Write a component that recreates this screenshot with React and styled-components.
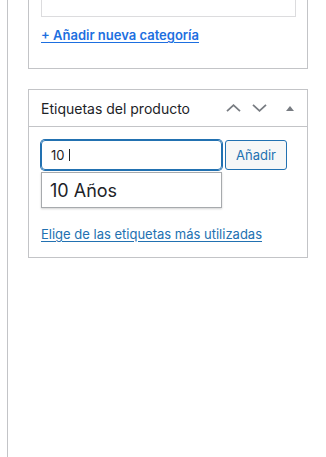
import styled, { createGlobalStyle } from 'styled-components';

const GlobalStyle = createGlobalStyle`
  body {
    margin: 0;
    background: #fff;
    font-family: Inter, "Liberation Sans", Arial, sans-serif;
    color: #1d2327;
  }
`;

const Page = styled.div`
  padding-left: 7px;
  min-height: 100vh;
`;

const Sidebar = styled.div`
  border-left: 1px solid #c3c4c7;
  min-height: 100vh;
  padding-left: 20px;
`;

const Panel = styled.div`
  width: 278px;
  border: 1px solid #c3c4c7;
  border-top: ${(p) => (p.$cut ? 'none' : '1px solid #c3c4c7')};
  margin-top: ${(p) => (p.$cut ? '0' : '20px')};
  background: #fff;
`;

const Inside = styled.div`
  padding: ${(p) => p.$pad};
`;

const CategoryList = styled.div`
  width: 253px;
  height: 16px;
  border: 1px solid #dcdcde;
  border-top: none;
`;

const Link = styled.a`
  display: block;
  font-size: 13px;
  line-height: 18px;
  font-weight: ${(p) => (p.$strong ? 600 : 400)};
  color: ${(p) => (p.$strong ? '#1d6fe0' : '#2271b1')};
  text-decoration: underline;
  text-underline-offset: 2px;
  margin-top: ${(p) => p.$top};
  cursor: pointer;
`;

const Header = styled.div`
  display: flex;
  align-items: center;
  height: 36px;
  border-bottom: 1px solid #c3c4c7;
  padding-left: 12px;
`;

const Title = styled.h2`
  flex: 1;
  margin: 0;
  font-size: 14px;
  font-weight: 400;
  color: #1d2327;
`;

const HandleButton = styled.button`
  width: ${(p) => p.$w}px;
  height: 36px;
  padding: 0;
  border: none;
  background: none;
  display: flex;
  align-items: center;
  justify-content: center;
  color: #787c82;
  cursor: pointer;
`;

const AddRow = styled.div`
  display: flex;
  gap: 3px;
`;

const TagInput = styled.div`
  box-sizing: border-box;
  width: 181px;
  height: 30px;
  border: 1px solid #2271b1;
  box-shadow: 0 0 0 1px #2271b1;
  border-radius: 4px;
  padding-left: 9px;
  display: flex;
  align-items: center;
  font-size: 13px;
  color: #1d2327;
`;

const Caret = styled.span`
  display: inline-block;
  width: 1px;
  height: 12px;
  background: #1d2327;
  margin-left: 4px;
`;

const AddButton = styled.button`
  box-sizing: border-box;
  width: 62px;
  height: 30px;
  border: 1px solid #2271b1;
  border-radius: 3px;
  background: #f6f7f7;
  color: #2271b1;
  font-family: inherit;
  font-size: 13px;
  padding: 0;
  cursor: pointer;
`;

const Suggest = styled.div`
  box-sizing: border-box;
  width: 181px;
  height: 36px;
  margin-top: 2px;
  border: 1px solid #a7aaad;
  box-shadow: 0 1px 2px rgba(0, 0, 0, 0.18);
  padding-left: 8px;
  display: flex;
  align-items: center;
  font-size: 18px;
  color: #1d2327;
`;

function Chevron({ up }) {
  return (
    <svg width="15" height="8" viewBox="0 0 15 8" fill="none">
      <path
        d={up ? 'M1 7.2 L7.5 1.2 L14 7.2' : 'M1 0.8 L7.5 6.8 L14 0.8'}
        stroke="currentColor"
        strokeWidth="1.8"
      />
    </svg>
  );
}

function Triangle() {
  return (
    <svg width="8" height="5" viewBox="0 0 8 5">
      <path d="M0 5 L4 0 L8 5 Z" fill="currentColor" />
    </svg>
  );
}

export default function App() {
  return (
    <>
      <GlobalStyle />
      <Page>
        <Sidebar>
          <Panel $cut>
            <Inside $pad="0 11px 24px 12px">
              <CategoryList />
              <Link $strong $top="9px">+ Añadir nueva categoría</Link>
            </Inside>
          </Panel>

          <Panel>
            <Header>
              <Title>Etiquetas del producto</Title>
              <HandleButton $w={26}>
                <Chevron up />
              </HandleButton>
              <HandleButton $w={27}>
                <Chevron />
              </HandleButton>
              <HandleButton $w={34}>
                <Triangle />
              </HandleButton>
            </Header>
            <Inside $pad="13px 12px 14px 12px">
              <AddRow>
                <TagInput>
                  10<Caret />
                </TagInput>
                <AddButton>Añadir</AddButton>
              </AddRow>
              <Suggest>10 Años</Suggest>
              <Link $top="17px">Elige de las etiquetas más utilizadas</Link>
            </Inside>
          </Panel>
        </Sidebar>
      </Page>
    </>
  );
}
